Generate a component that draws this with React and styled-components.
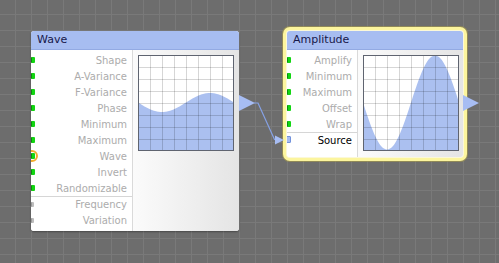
import React from "react";
import styled, { createGlobalStyle, css } from "styled-components";

const GlobalStyle = createGlobalStyle`
  html, body { margin: 0; padding: 0; }
  body {
    background: #6d6d6d;
    font-family: "DejaVu Sans", Verdana, sans-serif;
  }
`;

const Canvas = styled.div`
  position: relative;
  width: 499px;
  height: 263px;
  overflow: hidden;
  background-color: #6d6d6d;
  background-image:
    linear-gradient(to right, #797979 1px, transparent 1px),
    linear-gradient(to bottom, #797979 1px, transparent 1px);
  background-size: 16px 16px;
  background-position: 15px 14px;
`;

const Node = styled.div`
  position: absolute;
  left: ${(p) => p.$x}px;
  top: ${(p) => p.$y}px;
  width: ${(p) => p.$w}px;
  border-radius: 3px;
  background: #fff;
  box-shadow: 0 1px 2px rgba(0, 0, 0, 0.35);
  ${(p) =>
    p.$selected &&
    css`
      box-shadow: 0 0 0 1px #fbf8d8, 0 0 0 4px #fcf59e,
        0 0 0 5px rgba(160, 150, 80, 0.7);
    `}
`;

const Header = styled.div`
  height: 18px;
  line-height: 18px;
  padding-left: 6px;
  background: #a7bdf1;
  border-bottom: 1px solid #93aae3;
  border-radius: 3px 3px 0 0;
  color: #17184a;
  font-size: 11px;
`;

const Body = styled.div`
  display: flex;
  border-radius: 0 0 3px 3px;
  overflow: hidden;
`;

const Labels = styled.div`
  width: ${(p) => p.$w}px;
  flex: none;
  padding: 2px 0 3px;
  background: #fff;
  border-right: 1px solid #dadada;
`;

const Group = styled.div`
  box-shadow: ${(p) => (p.$sep ? "inset 0 1px #d6d6d6" : "none")};
`;

const Row = styled.div`
  position: relative;
  height: 16px;
  display: flex;
  align-items: center;
  justify-content: flex-end;
  padding-right: 5px;
  font-size: 10px;
  color: ${(p) => (p.$active ? "#000" : "#acacac")};
`;

const portKinds = {
  green: css`
    background: #12d612;
    border-left: 1px solid #0a8f0a;
    width: 3px;
    height: 6px;
    top: 5px;
  `,
  gray: css`
    background: #bdbdbd;
    border-left: 1px solid #999;
    width: 2px;
    height: 5px;
    top: 6px;
  `,
  input: css`
    background: #a7bdf1;
    border: 1px solid #7292dc;
    width: 3px;
    height: 5px;
    top: 4px;
    left: -1px;
  `,
};

const Port = styled.span`
  position: absolute;
  left: 0;
  border-radius: 1px;
  ${(p) => portKinds[p.$kind]}
`;

const Ring = styled.span`
  position: absolute;
  left: -5px;
  top: 2px;
  width: 8px;
  height: 8px;
  border: 2px solid #f2ad2e;
  border-radius: 50%;
`;

const GraphArea = styled.div`
  flex: 1;
  padding: 5px 6px 6px 5px;
  background: linear-gradient(to right, #fbfbfb, #e4e4e4);
`;

const GraphBox = styled.svg`
  display: block;
  width: 96px;
  height: 96px;
`;

const OutArrow = styled.svg`
  position: absolute;
  right: -16px;
  top: 64px;
  width: 16px;
  height: 16px;
`;

const Wires = styled.svg`
  position: absolute;
  left: 0;
  top: 0;
  width: 499px;
  height: 263px;
  pointer-events: none;
`;

function Graph({ fn }) {
  const pts = [];
  for (let x = 0; x <= 96; x += 1) pts.push(`${x},${fn(x).toFixed(2)}`);
  const grid = [];
  for (let i = 12; i < 96; i += 12) {
    grid.push(<line key={"v" + i} x1={i + 0.5} y1={0} x2={i + 0.5} y2={96} />);
    grid.push(<line key={"h" + i} x1={0} y1={i + 0.5} x2={96} y2={i + 0.5} />);
  }
  return (
    <GraphBox viewBox="0 0 96 96">
      <rect x="0" y="0" width="96" height="96" fill="#fff" />
      <polygon points={`0,96 ${pts.join(" ")} 96,96`} fill="#abc0f0" />
      <g stroke="rgba(0,0,0,0.16)" strokeWidth="1">{grid}</g>
      <rect x="0.5" y="0.5" width="95" height="95" fill="none" stroke="#5f6470" />
    </GraphBox>
  );
}

function Arrow() {
  return (
    <OutArrow viewBox="0 0 16 16">
      <polygon points="0,0 16,8 0,16" fill="#a7bdf3" />
    </OutArrow>
  );
}

function NodeView({ title, x, y, w, labelW, groups, fn, selected }) {
  return (
    <Node $x={x} $y={y} $w={w} $selected={selected}>
      <Header>{title}</Header>
      <Body>
        <Labels $w={labelW}>
          {groups.map((g, gi) => (
            <Group key={gi} $sep={gi > 0}>
              {g.map((r) => (
                <Row key={r.label} $active={r.active}>
                  {r.ring && <Ring />}
                  <Port $kind={r.port} />
                  {r.label}
                </Row>
              ))}
            </Group>
          ))}
        </Labels>
        <GraphArea>
          <Graph fn={fn} />
        </GraphArea>
      </Body>
      <Arrow />
    </Node>
  );
}

const waveGroups = [
  [
    { label: "Shape", port: "green" },
    { label: "A-Variance", port: "green" },
    { label: "F-Variance", port: "green" },
    { label: "Phase", port: "green" },
    { label: "Minimum", port: "green" },
    { label: "Maximum", port: "green" },
    { label: "Wave", port: "green", ring: true },
    { label: "Invert", port: "green" },
    { label: "Randomizable", port: "green" },
  ],
  [
    { label: "Frequency", port: "gray" },
    { label: "Variation", port: "gray" },
  ],
];

const ampGroups = [
  [
    { label: "Amplify", port: "green" },
    { label: "Minimum", port: "green" },
    { label: "Maximum", port: "green" },
    { label: "Offset", port: "green" },
    { label: "Wrap", port: "green" },
  ],
  [{ label: "Source", port: "input", active: true }],
];

const waveFn = (x) => 47.5 + 9.5 * Math.sin((2 * Math.PI * x) / 96);
const ampFn = (x) => 47.5 + 47 * Math.sin((2 * Math.PI * x) / 96);

export default function App() {
  return (
    <>
      <GlobalStyle />
      <Canvas>
        <NodeView
          title="Wave"
          x={31}
          y={31}
          w={208}
          labelW={101}
          groups={waveGroups}
          fn={waveFn}
        />
        <NodeView
          title="Amplitude"
          x={287}
          y={31}
          w={176}
          labelW={70}
          groups={ampGroups}
          fn={ampFn}
          selected
        />
        <Wires viewBox="0 0 499 263">
          <polyline
            points="254,103 258,103 274.5,139.5 278,140"
            fill="none"
            stroke="#86a2e6"
            strokeWidth="1.2"
          />
          <polygon points="275,135.5 284,140 275,144.5" fill="#a7bdf3" />
        </Wires>
      </Canvas>
    </>
  );
}
